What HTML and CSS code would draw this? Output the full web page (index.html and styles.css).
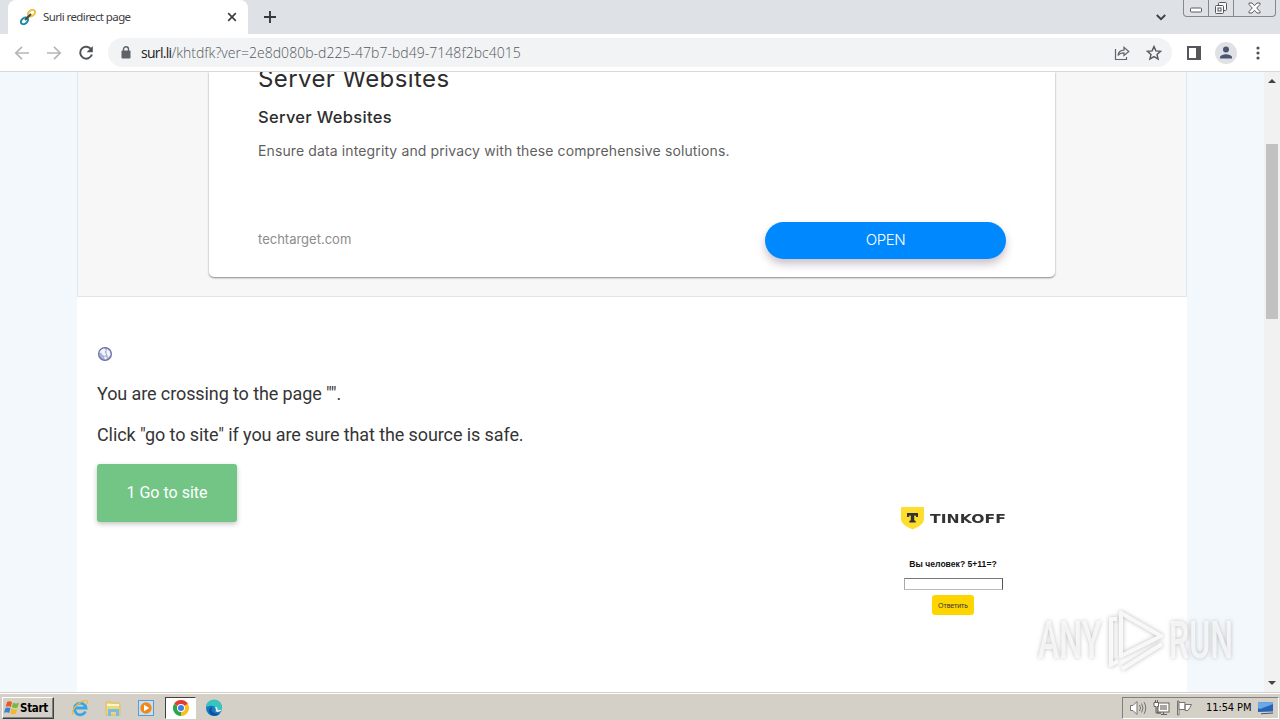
FILE: index.html
```html
<!DOCTYPE html>
<html lang="en">
<head>
    <meta charset="UTF-8">
    <title>Surli redirect page</title>
    <link rel="stylesheet" href="styles.css">
</head>
<body>
<div class="tabs">
    <div class="tab">
        <svg class="favicon" width="16" height="16" viewBox="0 0 16 16" fill="none" stroke-width="2">
            <ellipse cx="4.500" cy="11.800" rx="4" ry="2.800" transform="rotate(-40 4.500 11.800)" stroke="#168ba8"/>
            <ellipse cx="11.500" cy="4.200" rx="4" ry="2.800" transform="rotate(-40 11.500 4.200)" stroke="#efc13c"/>
            <path d="M5 11l6-6" stroke="#444b3f" stroke-width="2.200"/>
        </svg>
        <span class="tab-title">Surli redirect page</span>
        <svg class="tab-close" width="10" height="10" viewBox="0 0 10 10"><path d="M1.200 1.200l7.600 7.600M8.800 1.200L1.200 8.800" stroke="#3c4043" stroke-width="1.700"/></svg>
    </div>
    <svg class="new-tab" width="12" height="12" viewBox="0 0 12 12"><path d="M6 0v12M0 6h12" stroke="#35383d" stroke-width="1.900"/></svg>
    <svg class="chevron" width="10" height="7" viewBox="0 0 10 7"><path d="M.8 1L5 5.200 9.200 1" fill="none" stroke="#3c4043" stroke-width="1.900"/></svg>
    <div class="winbtns">
        <span><svg width="13" height="6" viewBox="0 0 13 6"><rect x=".5" y="1" width="11" height="4" rx="1" fill="#fff" stroke="#5b5d63"/></svg></span>
        <span><svg width="14" height="14" viewBox="0 0 14 14" fill="#f7f8fa" stroke="#55575d"><rect x="4.500" y="1.500" width="8" height="8" rx="1"/><rect x="1.500" y="4.500" width="8" height="8" rx="1"/><rect x="4" y="7" width="3" height="3"/></svg></span>
        <span><svg width="13" height="12" viewBox="0 0 13 12"><path d="M1 1h3l2.500 2.700L9 1h3v1.500L8.700 6l3.300 3.500V11H9L6.500 8.300 4 11H1V9.500L4.300 6 1 2.500z" fill="#fff" stroke="#5b5d63"/></svg></span>
    </div>
</div>
<div class="toolbar">
    <svg class="nav" width="16" height="16" viewBox="0 0 16 16" fill="none" stroke="#b5b6b8" stroke-width="1.700"><path d="M15 8H2M8 1.800L1.800 8 8 14.200"/></svg>
    <svg class="nav" width="16" height="16" viewBox="0 0 16 16" fill="none" stroke="#b5b6b8" stroke-width="1.700"><path d="M1 8h13M8 1.800L14.200 8 8 14.200"/></svg>
    <svg class="nav" width="16" height="16" viewBox="0 0 16 16"><path d="M13.300 4.500A6 6 0 1 0 13.900 9.500" fill="none" stroke="#505358" stroke-width="2"/><path d="M14.800 1v6.200H8.600z" fill="#505358"/></svg>
    <div class="omnibox">
        <svg class="lock" width="10" height="13" viewBox="0 0 10 13"><rect y="4.500" x=".5" width="9" height="8" rx="1" fill="#5f6368"/><path d="M2.500 5V3.300a2.500 2.500 0 0 1 5 0V5" fill="none" stroke="#5f6368" stroke-width="1.400"/></svg>
        <span class="url"><b>surl.li</b>/khtdfk?ver=2e8d080b-d225-47b7-bd49-7148f2bc4015</span>
        <svg class="share" width="16" height="16" viewBox="0 0 16 16" fill="none" stroke="#626468" stroke-width="1.200"><path d="M1.500 4v10.500h11V12"/><path d="M4 10.500c.4-3.500 2.500-5.200 6-5.300V2.300L14.800 6.500 10 10.500V7.800c-3 0-4.800.8-6 2.700z"/></svg>
        <svg class="star" width="16" height="16" viewBox="0 0 16 16"><path d="M8 1.500l1.900 4.400 4.700.4-3.600 3.100 1.100 4.600L8 11.600 3.900 14 5 9.400 1.400 6.300l4.700-.4z" fill="none" stroke="#55585c" stroke-width="1.400"/></svg>
    </div>
    <svg class="panel" width="14" height="14" viewBox="0 0 14 14"><path d="M0 0h14v14H0zM2 2v10h7V2z" fill="#55575b" fill-rule="evenodd"/></svg>
    <svg class="avatar" width="22" height="22" viewBox="0 0 22 22"><circle cx="11" cy="11" r="11" fill="#dfe1e5"/><circle cx="11" cy="7.500" r="3" fill="#4b5672"/><path d="M5 16.500v-1.300c0-2 4-3 6-3s6 1 6 3v1.300z" fill="#4b5672"/></svg>
    <svg class="dots" width="4" height="14" viewBox="0 0 4 14" fill="#505358"><circle cx="2" cy="2" r="1.600"/><circle cx="2" cy="7" r="1.600"/><circle cx="2" cy="12" r="1.600"/></svg>
</div>
<div class="viewport">
    <div class="page">
        <div class="ad">
            <div class="card">
                <h2>Server Websites</h2>
                <h3>Server Websites</h3>
                <p>Ensure data integrity and privacy with these comprehensive solutions.</p>
                <div class="card-foot">
                    <span class="domain">techtarget.com</span>
                    <a class="open"><span>OPEN</span></a>
                </div>
            </div>
        </div>
        <div class="content">
            <div class="message">
                <svg class="globe" width="16" height="16" viewBox="0 0 16 16"><circle cx="8" cy="8" r="6.400" fill="#aab2da" stroke="#686f9c" stroke-width="1.200"/><path d="M2.500 6.500Q4 3 7 2.500L9 4 7.500 6 9 8l-1 2-2.500-1-1-2zM10 3l2.500 2 1 3.500-2 3-1.500-3L9.500 6zM7 11l2-.5 1 2-2 1z" fill="#f3f5fc"/></svg>
                <p class="line1">You are crossing to the page "".</p>
                <p class="line2">Click "go to site" if you are sure that the source is safe.</p>
                <a class="go"><span>1 Go to site</span></a>
            </div>
            <div class="captcha">
                <div class="brand">
                    <svg width="24" height="24" viewBox="0 0 24 24"><path d="M0 1h23v12c0 5-6 8-11.500 10.500C6 21 0 18 0 13z" fill="#ffdd2d"/><path d="M6 7h11v4h-1.700l-.8-1.500h-1.300v4.800l1.500.7v1.500H8.300V15l1.500-.7V9.500h-1.300L7.700 11H6z" fill="#333"/></svg>
                    <span>TINKOFF</span>
                </div>
                <div class="question">Вы человек? 5+11=?</div>
                <input class="answer" type="text">
                <button class="reply">Ответить</button>
            </div>
        </div>
    </div>
    <div class="scrollbar">
        <i class="up"></i>
        <div class="thumb"></div>
        <i class="down"></i>
    </div>
    <div class="watermark">
        <span class="any">ANY</span>
        <svg width="60" height="66" viewBox="0 0 60 66" fill="none" stroke="#fff" stroke-opacity=".85" stroke-width="4" stroke-linejoin="round"><path d="M15 5v43L55 28z"/><path d="M11 11H5v46l7-4M16 61L56 36" /></svg>
        <span class="run">RUN</span>
    </div>
</div>
<div class="taskbar">
    <div class="start">
        <svg width="16" height="16" viewBox="0 0 16 16"><path d="M3 2q3-1.500 5 .3L6.800 7Q4.500 5.500 1.700 6.800z" fill="#e85a24"/><path d="M9 2.700q3 1.500 6 0L13.500 7.500q-3 1.200-5.700-.2z" fill="#79b93c"/><path d="M1.500 8Q4 6.800 6.500 8.200L5.200 13Q3 11.500 0 12.700z" fill="#3b83d0"/><path d="M7.500 8.700q3 1.500 5.800.2L12 13.500q-3 1.500-5.800 0z" fill="#f4b923"/></svg>
        <span>Start</span>
    </div>
    <svg class="task" width="18" height="18" viewBox="0 0 18 18" fill="none"><path d="M14.500 12.500A5.800 5.800 0 1 1 15 9H5" stroke="#39a5e2" stroke-width="2.800"/><path d="M2 15.500C-1 12 10-.5 16 2q1.500 1 0 3" stroke="#e9bb43" stroke-width="1.300"/></svg>
    <svg class="task" width="18" height="18" viewBox="0 0 18 18"><path d="M2 3h5l1 1h8v12H2z" fill="#f0d67b" stroke="#d8b84e" stroke-width=".7"/><path d="M3 6h12" stroke="#fff5c7" stroke-width="2"/><path d="M4 17v-7h11v7h-3v-4H7v4z" fill="#79bde0"/></svg>
    <svg class="task" width="18" height="18" viewBox="0 0 18 18"><rect x="1.500" y="1.500" width="15" height="15" fill="#c9def0" stroke="#5b9bd0"/><circle cx="9" cy="9" r="5.700" fill="#f18718"/><path d="M7 5.700L12.300 9 7 12.300z" fill="#fff"/></svg>
    <div class="task active">
        <svg width="16" height="16" viewBox="0 0 16 16"><path d="M8 8L1.070 4a8 8 0 0 1 13.860 0z" fill="#e33b2e"/><path d="M8 8l6.930-4A8 8 0 0 1 8 16z" fill="#fbc116"/><path d="M8 8v8A8 8 0 0 1 1.070 4z" fill="#2da44e"/><circle cx="8" cy="8" r="4" fill="#fff"/><circle cx="8" cy="8" r="3" fill="#3f7ee8"/></svg>
    </div>
    <svg class="task" width="18" height="18" viewBox="0 0 18 18"><circle cx="9" cy="9" r="8" fill="#1679c4"/><path d="M1 8a8 8 0 0 1 16 1c0 3-4 4-6 2.500 1-2 0-4-3-4.500-3-.5-5 .5-7 1z" fill="#37c5bd"/><path d="M7 8c-2 4 1 7.500 8 6.500-3 3-8 3-10 0-2-2.700-.5-6 2-6.500z" fill="#104f9e"/><path d="M9.500 8.500c2 1 1.500 3 1 3.800 2 1.400 4.700.5 6-1v-.8c-3 1-4 .5-4-.3 0-2-1-3-3-1.700z" fill="#e3eef2"/></svg>
    <div class="tray">
        <svg width="18" height="16" viewBox="0 0 18 16" fill="none" stroke="#77736e"><path d="M1.500 5.500H4l4-4v13l-4-4H1.500z" fill="#fff"/><path d="M10.500 5q2 3 0 6M12.500 3.500q3 4.500 0 9M15 2q3.500 6 0 12"/></svg>
        <svg width="17" height="16" viewBox="0 0 17 16" fill="#fff" stroke="#66625d"><rect x="5" y="3" width="11" height="9"/><rect x="7" y="5" width="7" height="5" fill="#aaa7a2" stroke="none"/><path d="M8 14.500h6M10.500 12v2"/><path d="M1 2.500h4.500v4H4V13h4H3V6.500H1zM2.500 0v2M4.500 0v2"/></svg>
        <svg width="17" height="16" viewBox="0 0 17 16" fill="#fff" stroke="#77736e"><path d="M1.500 1h1.500v14H1.500z"/><path d="M3 2.500h6v7H3zM9 4.500h6.500L14 7.500l-2 3H9z"/></svg>
        <span class="clock">11:54 PM</span>
        <svg class="desk" width="17" height="14" viewBox="0 0 17 14"><path d="M1 1.500L16 1v9.500L1 11z" fill="#2764b6"/><path d="M1 1.500L16 1v2L3 8 1 7z" fill="#6aa9e6"/><path d="M4 12.800L16 12" stroke="#455268"/></svg>
    </div>
</div>
</body>
</html>
```

FILE: styles.css
```css
* {
    margin: 0;
    padding: 0;
    box-sizing: border-box;
}

body {
    width: 1280px;
    height: 720px;
    overflow: hidden;
    display: flex;
    flex-direction: column;
    background: #fff;
    font-family: Roboto, "Liberation Sans", sans-serif;
}

svg {
    display: block;
    flex: none;
}

span {
    white-space: nowrap;
}

/* browser */
.tabs {
    height: 34px;
    display: flex;
    background: #dee1e6;
    padding-left: 8px;
}

.tab {
    width: 240px;
    height: 34px;
    display: flex;
    align-items: center;
    padding: 0 11px 0 12px;
    background: #fff;
    border-radius: 8px 8px 0 0;
}

.tab-title {
    flex: 1;
    margin: -2px 0 0 7px;
    font: 11.5px "Noto Sans", sans-serif;
    letter-spacing: -0.6px;
    color: #3c4043;
}

.new-tab {
    margin: 11px 0 0 16px;
}

.chevron {
    margin: 14px 17px 0 auto;
}

.winbtns {
    height: 17px;
    width: 93px;
    margin-right: 4px;
    display: flex;
    border: 1px solid #85888f;
    border-top: 0;
    border-radius: 0 0 4px 4px;
}

.winbtns span {
    flex: 1;
    display: flex;
    justify-content: center;
    align-items: center;
    border-left: 1px solid #85888f;
}

.winbtns span:first-child {
    flex: none;
    width: 24px;
    padding-top: 4px;
    border-left: 0;
}

.winbtns span:nth-child(2) {
    flex: none;
    width: 25px;
}

.toolbar {
    height: 38px;
    display: flex;
    align-items: center;
    padding-left: 14px;
    background: #fff;
    border-bottom: 1px solid #d6d8db;
}

.nav {
    margin-right: 16px;
}

.omnibox {
    width: 1064px;
    height: 29px;
    margin-left: -2px;
    display: flex;
    align-items: center;
    padding: 0 10px 0 13px;
    border-radius: 15px;
    background: #f1f3f4;
}

.url {
    flex: 1;
    margin-left: 10px;
    font: 300 14px "Open Sans", sans-serif;
    letter-spacing: 0.03px;
    color: #54585c;
}

.url b {
    font-weight: 400;
    letter-spacing: -0.7px;
    color: #202124;
}

.star {
    margin-left: 16px;
}

.panel {
    margin-left: 15px;
}

.avatar {
    margin-left: 14px;
}

.dots {
    margin-left: 19px;
}

/* page */
.viewport {
    position: relative;
    height: 620px;
    overflow: hidden;
    display: flex;
    background: #f3f8fc;
}

.page {
    width: 1110px;
    margin-left: 77px;
    background: #fff;
}

.ad {
    height: 225px;
    padding: 0 131px;
    background: #f7f7f7;
    border: 1px solid #dde6ed;
    border-top: 0;
}

.card {
    height: 205px;
    width: 846px;
    padding: 0 49px;
    background: #fff;
    border-radius: 0 0 5px 5px;
    box-shadow: 0 1px 2px rgba(0, 0, 0, 0.45);
    display: flow-root;
    font-family: Inter, sans-serif;
}

.card h2 {
    margin-top: -8px;
    font-size: 24px;
    line-height: 30px;
    font-weight: 400;
    letter-spacing: 0.4px;
    color: #2d2d2d;
}

.card h3 {
    margin-top: 11px;
    font-size: 16.5px;
    line-height: 24px;
    font-weight: 500;
    letter-spacing: 0.3px;
    color: #2d2d2d;
}

.card p {
    margin-top: 12px;
    font-size: 14px;
    line-height: 20px;
    letter-spacing: 0.12px;
    color: #5f5f5f;
    white-space: nowrap;
}

.card-foot {
    margin-top: 61px;
    display: flex;
    justify-content: space-between;
}

.domain {
    font-size: 13px;
    line-height: 35px;
    color: #8c8c8c;
}

.open {
    width: 241px;
    height: 37px;
    line-height: 36px;
    border-radius: 19px;
    background: #08f;
    box-shadow: 0 5px 8px rgba(60, 30, 60, 0.27);
    color: #fff;
    font-size: 15px;
    font-weight: 300;
    letter-spacing: -0.4px;
    text-align: center;
}

.content {
    display: flex;
    padding: 49px 0 0 20px;
}

.message {
    width: 794px;
    color: #353535;
    font-size: 18px;
    line-height: 41px;
    letter-spacing: -0.1px;
}

.message .line1 {
    margin-top: 11px;
}

.go {
    display: block;
    width: 140px;
    height: 58px;
    margin-top: 9px;
    line-height: 57px;
    border-radius: 3px;
    background: #72c585;
    box-shadow: 0 2px 5px rgba(40, 40, 40, 0.28);
    color: #fff;
    font-size: 16px;
    letter-spacing: 0;
    text-align: center;
}

.captcha {
    width: 124px;
    padding-top: 160px;
    display: flex;
    flex-direction: column;
    align-items: center;
    font-family: "Liberation Sans", sans-serif;
}

.brand {
    display: flex;
    align-items: center;
    height: 24px;
    color: #333;
    font: bold 13px "DejaVu Sans", sans-serif;
}

.brand span {
    width: 76px;
    margin-left: 5px;
    letter-spacing: 0.05px;
    transform: scaleX(1.2);
    transform-origin: 0 50%;
}

.question {
    margin-top: 27px;
    font-size: 8.6px;
    font-weight: bold;
    line-height: 14px;
    color: #111;
    white-space: nowrap;
}

.answer {
    width: 99px;
    height: 12px;
    margin-top: 7px;
    border: 1px solid #999;
    border-color: #777 #555 #bbb #aaa;
}

.reply {
    width: 42px;
    height: 20px;
    margin-top: 5px;
    border: 0;
    border-radius: 3px;
    background: #ffd500;
    font: 7px "Liberation Sans", sans-serif;
    color: #333;
}

.scrollbar {
    width: 16px;
    margin-left: auto;
    display: flex;
    flex-direction: column;
    align-items: center;
    background: #f1f1f1;
}

.scrollbar .up {
    margin-top: 7px;
    border: 4px solid transparent;
    border-top: 0;
    border-bottom-color: #444;
}

.thumb {
    width: 12px;
    height: 175px;
    margin-top: 61px;
    background: #c1c1c1;
}

.scrollbar .down {
    margin: auto 0 7px;
    border: 4px solid transparent;
    border-bottom: 0;
    border-top-color: #444;
}

.watermark {
    position: absolute;
    left: 1038px;
    top: 536px;
    display: flex;
    align-items: center;
    color: rgba(255, 255, 255, 0.75);
    font: 500 51px/66px Roboto, sans-serif;
    filter: drop-shadow(0 0 2px rgba(90, 90, 90, 0.5));
}

.watermark span {
    width: 66px;
    transform-origin: 0 50%;
    transform: scaleX(0.63);
}

.watermark svg {
    margin: 0 3px 0 2px;
}

/* taskbar */
.taskbar {
    height: 28px;
    display: flex;
    align-items: center;
    padding: 2px 0 0 2px;
    background: #d4d0c8;
    border-top: 1px solid #d4d0c8;
    box-shadow: inset 0 1px #fff;
}

.start {
    width: 52px;
    height: 22px;
    display: flex;
    align-items: center;
    padding-left: 1px;
    margin-right: 17px;
    border: 1px solid;
    border-color: #fff #404040 #404040 #fff;
    box-shadow: inset -1px -1px #808080;
    font: bold 11.5px "DejaVu Sans Condensed", sans-serif;
}

.start span {
    letter-spacing: -0.3px;
}

.task {
    margin-right: 15px;
}

.active {
    width: 31px;
    height: 22px;
    margin: 0 9px 0 -5px;
    display: flex;
    align-items: center;
    justify-content: center;
    background: #fff;
    border: 1px solid;
    border-color: #404040 #fff #fff #404040;
}

.tray {
    width: 157px;
    height: 22px;
    margin: 0 1px 0 auto;
    display: flex;
    align-items: center;
    gap: 6px;
    padding-left: 6px;
    border: 1px solid;
    border-color: #808080 #fff #fff #808080;
}

.clock {
    margin-left: 7px;
    font: 11px "DejaVu Sans Condensed", sans-serif;
    letter-spacing: -0.1px;
}
```
